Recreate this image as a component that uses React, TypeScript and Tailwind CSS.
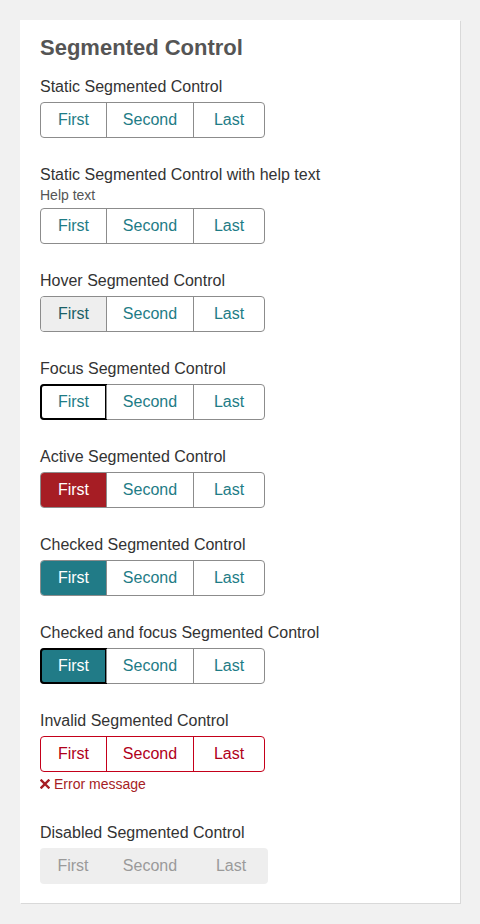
import React from "react";

type Variant = "static" | "hover" | "focus" | "active" | "checked" | "checkedFocus" | "invalid" | "disabled";

const widths = ["w-[65px]", "w-[87px]", "w-[71px]"];
const dWidths = ["w-[66px]", "w-[88px]", "w-[74px]"];
const labels = ["First", "Second", "Last"];

function Control({ variant }: { variant: Variant }) {
  if (variant === "disabled") {
    return (
      <div className="flex w-[228px] h-[36px] rounded-[4px] bg-[#eeeeee] text-[16px] text-[#9a9a9a]">
        {labels.map((l, i) => (
          <div key={l} className={`${dWidths[i]} flex items-center justify-center`}>{l}</div>
        ))}
      </div>
    );
  }
  const invalid = variant === "invalid";
  const borderColor = invalid ? "border-[#c4001a]" : "border-[#8c8c8c]";
  return (
    <div className={`flex w-[225px] h-[36px] rounded-[4px] border ${borderColor} text-[16px] bg-white`}>
      {labels.map((l, i) => {
        let cls = invalid ? "text-[#b0001a]" : "text-[#1e7c86]";
        let focus = false;
        if (i === 0) {
          cls += " rounded-l-[3px]";
          if (variant === "hover") cls = "bg-[#eeeeee] text-[#1a5f67] rounded-l-[3px]";
          if (variant === "focus") focus = true;
          if (variant === "active") cls = "bg-[#a61d24] text-white rounded-l-[3px]";
          if (variant === "checked") cls = "bg-[#217b87] text-white rounded-l-[3px]";
          if (variant === "checkedFocus") {
            cls = "bg-[#217b87] text-white rounded-l-[3px]";
            focus = true;
          }
        }
        const sep = i > 0 ? `border-l ${borderColor}` : "";
        return (
          <div key={l} className={`${widths[i]} relative shrink-0 flex items-center justify-center ${sep} ${cls}`}>
            {focus ? (
              <span className="absolute -top-px -bottom-px -left-px -right-px border-2 border-black rounded-l-[4px]" />
            ) : null}
            <span className="relative">{l}</span>
          </div>
        );
      })}
    </div>
  );
}

function Group({ label, variant, help, error, last }: { label: string; variant: Variant; help?: string; error?: string; last?: boolean }) {
  return (
    <div className={last ? "" : "mb-[26px]"}>
      <div className="text-[16px] leading-[20px] text-[#333333] pt-px -mb-px">{label}</div>
      {help ? <div className="text-[14px] leading-[18px] text-[#555555] mt-[2px]">{help}</div> : null}
      <div className={help ? "mt-[4px]" : "mt-[6px]"}>
        <Control variant={variant} />
      </div>
      {error ? (
        <div className="flex items-center gap-[4px] text-[14px] leading-[24px] text-[#a61d24] mb-[2px]">
          <svg width="10" height="10" viewBox="0 0 10 10">
            <path d="M1.5 1.5 L8.5 8.5 M8.5 1.5 L1.5 8.5" stroke="#a61d24" strokeWidth="2.4" strokeLinecap="square" />
          </svg>
          <span>{error}</span>
        </div>
      ) : null}
    </div>
  );
}

export default function App() {
  return (
    <div className="min-h-[924px] w-[480px] bg-[#f1f1f1] pt-[20px] pl-[20px]" style={{ fontFamily: '"Liberation Sans", Arial, Helvetica, sans-serif' }}>
      <div className="w-[440px] bg-white px-[20px] pt-[16px] pb-[19px] shadow-[1px_1px_0_#d9d9d9]">
        <h1 className="text-[22px] leading-[24px] font-bold text-[#555555] mb-[16px]">Segmented Control</h1>
        <Group label="Static Segmented Control" variant="static" />
        <Group label="Static Segmented Control with help text" help="Help text" variant="static" />
        <Group label="Hover Segmented Control" variant="hover" />
        <Group label="Focus Segmented Control" variant="focus" />
        <Group label="Active Segmented Control" variant="active" />
        <Group label="Checked Segmented Control" variant="checked" />
        <Group label="Checked and focus Segmented Control" variant="checkedFocus" />
        <Group label="Invalid Segmented Control" variant="invalid" error="Error message" />
        <Group label="Disabled Segmented Control" variant="disabled" last />
      </div>
    </div>
  );
}
